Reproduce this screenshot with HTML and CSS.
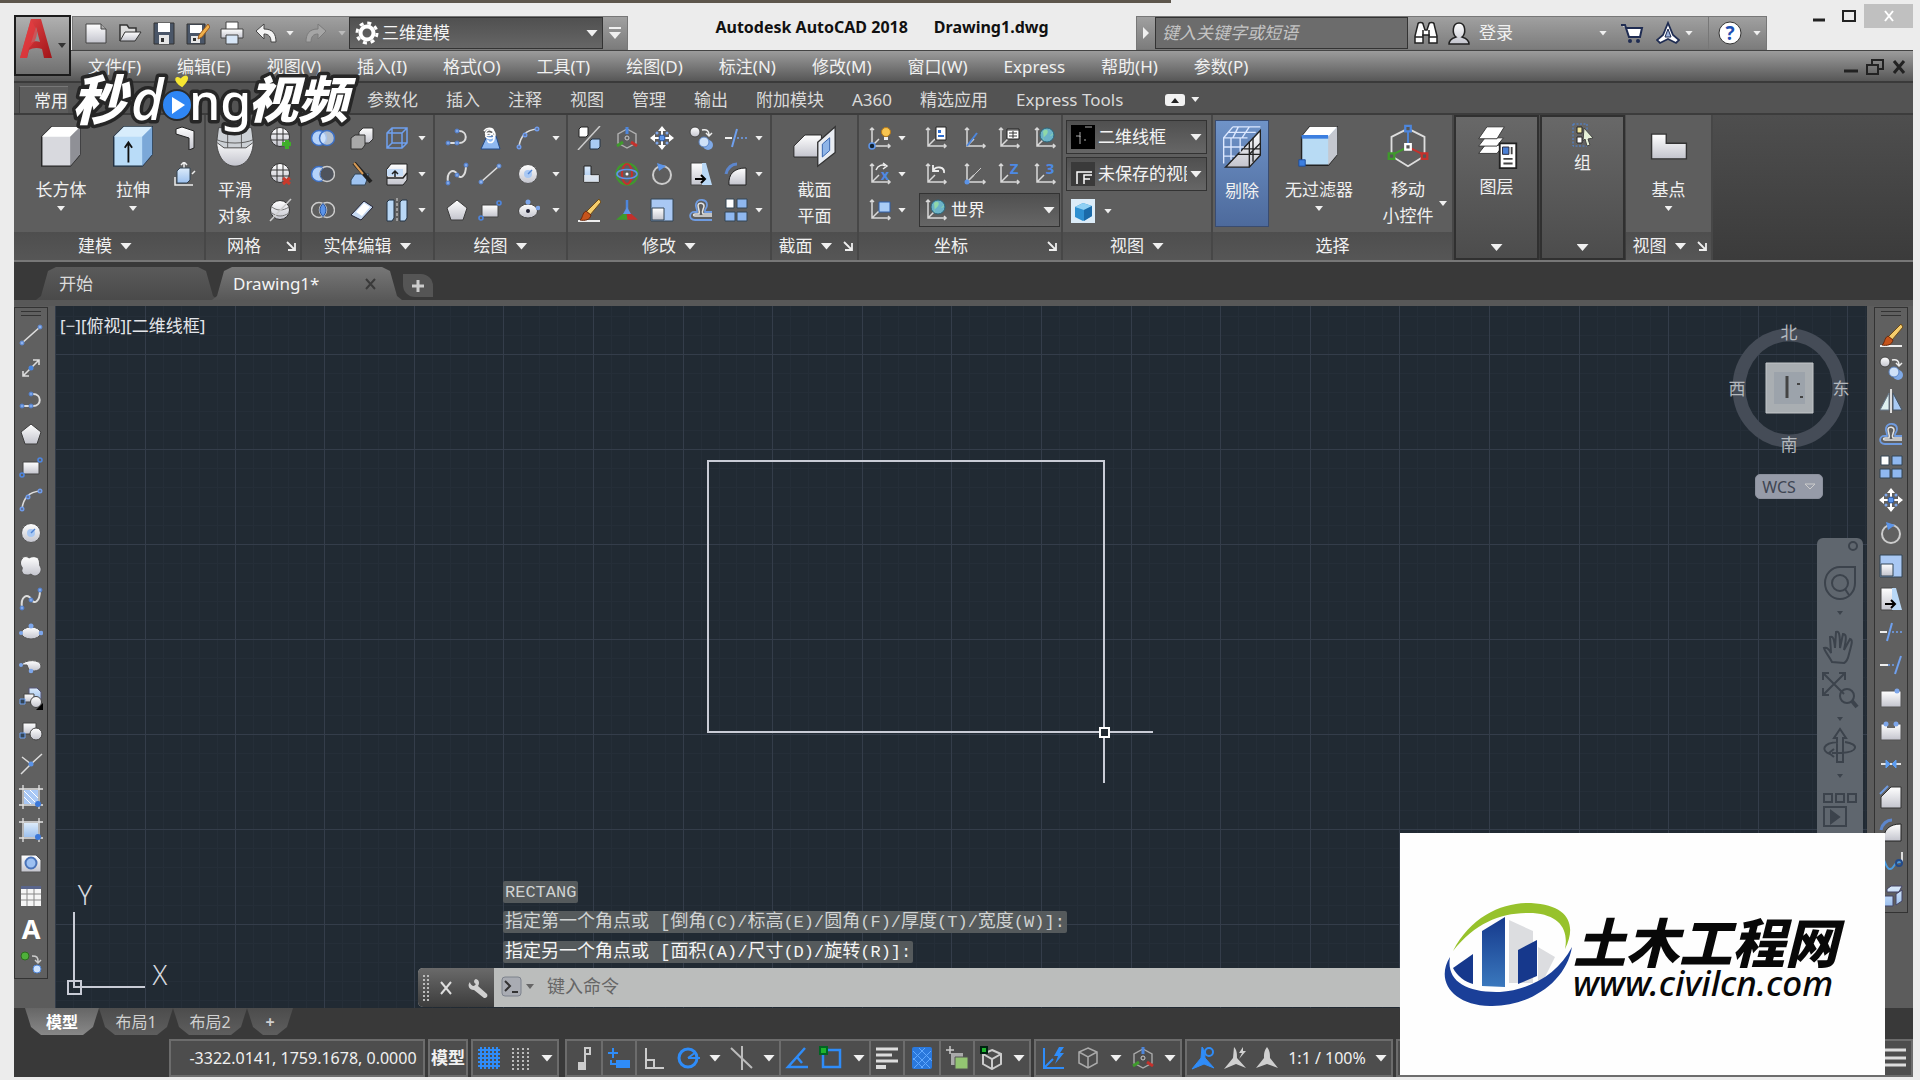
FILE: index.html
```html
<!DOCTYPE html>
<html lang="zh-CN">
<head>
<meta charset="utf-8">
<title>Autodesk AutoCAD 2018 - Drawing1.dwg</title>
<link rel="stylesheet" href="styles.css">
</head>
<body>
<svg class="defs" aria-hidden="true">
  <defs>
    <linearGradient id="gw" x1="0" y1="0" x2="0" y2="1"><stop offset="0" stop-color="#fff"/><stop offset="1" stop-color="#c3c4cd"/></linearGradient>
    <linearGradient id="gb" x1="0" y1="0" x2="0" y2="1"><stop offset="0" stop-color="#dcebfa"/><stop offset="1" stop-color="#9cc0ee"/></linearGradient>
    <linearGradient id="gred" x1="0" y1="0" x2="1" y2="1"><stop offset="0" stop-color="#e8484a"/><stop offset="1" stop-color="#a01418"/></linearGradient>
    <linearGradient id="gtower" x1="0" y1="0" x2="0" y2="1"><stop offset="0" stop-color="#15398c"/><stop offset="1" stop-color="#3a78bd"/></linearGradient>
    <g id="axes" fill="none" stroke="#d9d9d9" stroke-width="1.5"><path d="M4 2v18h18M2 4l2-2 2 2M20 18l2 2-2 2M4 20l7-7"/></g>
    <g id="tree" fill="none" stroke="#e8e8e8" stroke-width="1.4"><path d="M12 3l9 5v9l-9 5-9-5V8z"/></g>
  </defs>
  <symbol id="page" viewBox="0 0 24 24"><path d="M2 3h15l5 5v14H2z" fill="url(#gw)" stroke="#444"/><path d="M17 3v5h5" fill="#aaa" stroke="#444"/></symbol>
  <symbol id="open" viewBox="0 0 24 24"><path d="M2 20V4h7l2 3h7v4" fill="#ddd" stroke="#333" stroke-width="1.5"/><path d="M2 20l5-9h16l-6 9z" fill="url(#gw)" stroke="#333"/></symbol>
  <symbol id="save" viewBox="0 0 24 24"><path d="M2 2h20v21H2z" fill="#4a5668" stroke="#333"/><path d="M6 2h12v9H6z" fill="#fff"/><path d="M7 14h10v9H7z" fill="#e6e6e6"/><path d="M9 17h3v4H9z" fill="#333"/></symbol>
  <symbol id="saveas" viewBox="0 0 24 24"><path d="M1 3h18v20H1z" fill="#4a5668" stroke="#333"/><path d="M4 4h12v8H4z" fill="#fff"/><path d="M5 15h9v7H5z" fill="#e6e6e6"/><path d="M7 17h3v3H7z" fill="#333"/><path d="M22 3l-9 11-1 4 4-2 8-10z" fill="#f0b04a" stroke="#9a5a20"/></symbol>
  <symbol id="print" viewBox="0 0 24 24"><path d="M6 1h12v8H6z" fill="#fff" stroke="#444"/><path d="M1 8h22v9H1z" fill="url(#gw)" stroke="#444"/><path d="M6 14h12v9H6z" fill="#d7e6f7" stroke="#444"/></symbol>
  <symbol id="undo" viewBox="0 0 24 24"><path d="M10 3v5c9 0 12 5 12 13h-5c0-5-2-8-7-8v5L2 10z" fill="#f2f2f2" stroke="#444"/></symbol>
  <symbol id="redo" viewBox="0 0 24 24"><path d="M14 3v5C5 8 2 13 2 21h5c0-5 2-8 7-8v5l8-8z" fill="#a5a5a5" stroke="#7b7b7b"/></symbol>
  <symbol id="gear" viewBox="0 0 24 24"><circle cx="12" cy="12" r="6.500" fill="none" stroke="#fff" stroke-width="4"/><circle cx="12" cy="12" r="10" fill="none" stroke="#fff" stroke-width="3" stroke-dasharray="4 3.850"/></symbol>
  <symbol id="launch" viewBox="0 0 10 10"><path d="M1 1l5 5M9 2v7H2M9 9L5 5" fill="none" stroke="#eee" stroke-width="1.800"/></symbol>

  <symbol id="line" viewBox="0 0 24 24"><path d="M3 20L21 4" stroke="#ddd" stroke-width="1.600"/><g fill="#8fb3ee" stroke="#5a86d0"><circle cx="3" cy="20" r="2"/><circle cx="21" cy="4" r="2"/></g></symbol>
  <symbol id="xline" viewBox="0 0 24 24"><path d="M4 20L20 4M14 4h6v5M4 15v5h6" fill="none" stroke="#ddd" stroke-width="1.600"/><circle cx="12" cy="12" r="2.500" fill="#4a86dc"/></symbol>
  <symbol id="pline" viewBox="0 0 24 24"><path d="M2 17h12c9 0 9-12 0-12" fill="none" stroke="#ddd" stroke-width="2"/><g fill="#7da6ea" stroke="#4f7cc8"><circle cx="3" cy="17" r="2"/><circle cx="12" cy="17" r="2"/><circle cx="12" cy="5" r="2"/></g></symbol>
  <symbol id="poly" viewBox="0 0 24 24"><path d="M12 2l10 8-4 12H6L2 10z" fill="url(#gw)" stroke="#3c3c3c"/></symbol>
  <symbol id="rect" viewBox="0 0 24 24"><path d="M4 7h16v12H4z" fill="url(#gw)" stroke="#444"/><g fill="none" stroke="#4e86e0" stroke-width="1.600"><circle cx="21" cy="5" r="2"/><circle cx="3" cy="20" r="2"/></g></symbol>
  <symbol id="arc" viewBox="0 0 24 24"><path d="M3 21C4 11 10 4 21 3" fill="none" stroke="#ddd" stroke-width="1.600"/><g fill="#5d6f94" stroke="#6f9bea" stroke-width="1.400"><circle cx="3" cy="21" r="1.800"/><circle cx="9" cy="9" r="1.800"/><circle cx="21" cy="3" r="1.800"/></g></symbol>
  <symbol id="circle" viewBox="0 0 24 24"><circle cx="12" cy="12" r="9.500" fill="url(#gw)" stroke="#555"/><circle cx="12" cy="12" r="4" fill="#a9c8f3"/><path d="M12 12l4-4" stroke="#4f83d4" stroke-width="1.500"/></symbol>
  <symbol id="cloud" viewBox="0 0 24 24"><path d="M3 5c1-3 5-3 7-1 3-2 9-2 10 2 1 3 0 4 1 6 2 3 1 6-1 8-3 3-6 2-8 0-3 2-8 1-9-2-1-2 1-3 0-5-2-2-2-6 0-8z" fill="url(#gw)" stroke="#555"/></symbol>
  <symbol id="spline" viewBox="0 0 24 24"><path d="M3 21C1 9 9 6 12 12s9 3 9-9" fill="none" stroke="#ddd" stroke-width="2"/><g fill="#7da6ea" stroke="#4f7cc8"><circle cx="3" cy="21" r="2"/><circle cx="12" cy="13" r="2"/><circle cx="21" cy="3" r="2"/></g></symbol>
  <symbol id="ellipse" viewBox="0 0 24 24"><ellipse cx="12" cy="13" rx="9.500" ry="6" fill="url(#gw)" stroke="#555"/><g fill="#7da6ea"><circle cx="12" cy="6" r="2.500"/><circle cx="22" cy="13" r="2.300"/><circle cx="2" cy="13" r="2"/></g></symbol>
  <symbol id="ellipsec" viewBox="0 0 24 24"><ellipse cx="12" cy="13" rx="9.500" ry="7" fill="url(#gw)" stroke="#444"/><circle cx="12" cy="13" r="2" fill="#223"/><g fill="#7da6ea"><circle cx="12" cy="4" r="2.500"/><circle cx="22" cy="10" r="2.300"/></g></symbol>
  <symbol id="earc" viewBox="0 0 24 24"><path d="M2 12c4-6 20-6 20 1 0 5-8 6-12 4l-2-5z" fill="url(#gw)" stroke="#555"/><g fill="#7da6ea"><circle cx="12" cy="18" r="2.300"/><circle cx="2" cy="12" r="2"/></g></symbol>
  <symbol id="insb" viewBox="0 0 24 24"><path d="M10 2h8l4 4v8H10z" fill="url(#gb)" stroke="#557"/><path d="M5 8h10v8H5z" fill="url(#gw)" stroke="#444"/><circle cx="17" cy="16" r="5.500" fill="url(#gw)" stroke="#444"/><path d="M1 13h5v5H1z" fill="#345" stroke="#6fa0ee"/><path d="M24 17v7h-7z" fill="#000"/></symbol>
  <symbol id="makeb" viewBox="0 0 24 24"><path d="M4 4h13v11H4z" fill="url(#gw)" stroke="#444"/><circle cx="17" cy="15" r="6" fill="url(#gw)" stroke="#444"/><path d="M1 14h5v5H1z" fill="#345" stroke="#6fa0ee"/></symbol>
  <symbol id="point" viewBox="0 0 24 24"><path d="M3 5l9 7L23 2M12 12L2 22" fill="none" stroke="#ddd" stroke-width="1.500"/><circle cx="12" cy="12" r="2.500" fill="#5c94e8"/></symbol>
  <symbol id="hatch" viewBox="0 0 24 24"><path d="M5 5h14v14H5z" fill="#a9c8f5"/><path d="M5 12l7 7M5 6l13 13M11 5l8 8" stroke="#fff"/><path d="M4 0v24M20 0v24M0 4h24M0 20h24" stroke="#e4e4e4" stroke-width="1.300"/><circle cx="19" cy="19" r="3" fill="#3c78d8"/></symbol>
  <symbol id="grad" viewBox="0 0 24 24"><path d="M5 5h14v14H5z" fill="url(#gb)"/><path d="M4 0v24M20 0v24M0 4h24M0 20h24" stroke="#e4e4e4" stroke-width="1.300"/><circle cx="19" cy="19" r="3" fill="#3c78d8"/></symbol>
  <symbol id="region" viewBox="0 0 24 24"><path d="M2 4h15l5 5v12H2z" fill="url(#gw)" stroke="#555"/><circle cx="12" cy="12" r="5.500" fill="#9cc0f2" stroke="#4a73b8" stroke-width="2"/></symbol>
  <symbol id="table" viewBox="0 0 24 24"><path d="M2 2h20v20H2z" fill="#f6f6f6"/><path d="M2 2h20v3H2z" fill="#59658c"/><path d="M2 10h20M2 16h20M8 5v17M15 5v17" stroke="#888"/></symbol>
  <symbol id="addsel" viewBox="0 0 24 24"><circle cx="6" cy="6" r="4" fill="#4fb03a" stroke="#2c6a1e"/><path d="M13 6c5 0 6 1 6 6M16 10l3 3 3-3" fill="none" stroke="#ccc" stroke-width="1.500"/><circle cx="18" cy="19" r="4" fill="#cfe4ff" stroke="#4f86d8"/></symbol>

  <symbol id="erase" viewBox="0 0 24 24"><path d="M1 23h22" stroke="#eee" stroke-width="2"/><path d="M22 1l2 3-11 13-4-3z" fill="#f5cd6c" stroke="#6d4a17"/><path d="M9 13l5 4c-1 5-6 6-11 5 3-2 2-7 6-9z" fill="#c6541c" stroke="#6b2a0c"/></symbol>
  <symbol id="copy" viewBox="0 0 24 24"><circle cx="6" cy="6" r="5" fill="url(#gw)" stroke="#444"/><path d="M13 4c5-1 7 1 7 5M17 7l3 3 3-3" fill="none" stroke="#eee" stroke-width="1.500"/><circle cx="19" cy="19" r="5" fill="#7fa9e6"/><circle cx="15" cy="16" r="5" fill="#cfe1f8" stroke="#5d85c4"/></symbol>
  <symbol id="mirror" viewBox="0 0 24 24"><path d="M10 4v17H1z" fill="#dff0ef" stroke="#678"/><path d="M14 4v17h9z" fill="#a9caf4" stroke="#456"/><path d="M12 0v24" stroke="#ddd" stroke-width="2"/></symbol>
  <symbol id="offset" viewBox="0 0 24 24"><path d="M23 22H6c-7 0-6-9 0-8h2c1-3-2-4-1-8 2-6 11-5 11 1 0 4-3 4-2 7h7" fill="none" stroke="#6f9be0" stroke-width="1.800"/><path d="M23 18H6c-2 0-2-2 0-2h4c1-4-1-5-1-9 1-3 6-2 6 1 0 3-3 5-1 8h9" fill="none" stroke="#e4e4e4" stroke-width="1.500"/></symbol>
  <symbol id="array" viewBox="0 0 24 24"><g stroke="#345"><path d="M2 1h8v9H2z" fill="#fff"/><path d="M13 1h10v9H13zM1 14h10v9H1zM13 14h10v9H13z" fill="#8fb8f0"/></g></symbol>
  <symbol id="move" viewBox="0 0 24 24"><g fill="#fff"><path d="M12 0l4 5h-3v4h-2V5H8zM12 24l4-5h-3v-4h-2v4H8zM0 12l5-4v3h4v2H5v3zM24 12l-5-4v3h-4v2h4v3z"/></g><circle cx="12" cy="12" r="3" fill="#5c94e8" stroke="#2c5aa8"/><g fill="#7da6ea"><circle cx="7" cy="7" r="1.500"/><circle cx="17" cy="7" r="1.500"/><circle cx="7" cy="17" r="1.500"/><circle cx="17" cy="17" r="1.500"/></g></symbol>
  <symbol id="rotate" viewBox="0 0 24 24"><circle cx="12" cy="13" r="9" fill="none" stroke="#ccc" stroke-width="2"/><path d="M7 1l9 3-7 5z" fill="#5c94e8"/></symbol>
  <symbol id="scale" viewBox="0 0 24 24"><path d="M1 1h22v22H1z" fill="#a9c8f3" stroke="#345"/><path d="M2 10h12v12H2z" fill="url(#gw)" stroke="#345"/></symbol>
  <symbol id="stretch" viewBox="0 0 24 24"><path d="M2 1h12v22H2z" fill="url(#gw)" stroke="#444"/><path d="M13 1h4l6 22H13z" fill="#b9d8f6"/><path d="M6 17h9M12 13l4 4-4 4" fill="none" stroke="#000" stroke-width="2"/></symbol>
  <symbol id="trim" viewBox="0 0 24 24"><path d="M1 12h7" stroke="#eee" stroke-width="2"/><path d="M13 3L8 21" stroke="#6fa0ee" stroke-width="2"/><path d="M13 12h11" stroke="#6fa0ee" stroke-width="1.500" stroke-dasharray="2 2"/></symbol>
  <symbol id="extend" viewBox="0 0 24 24"><path d="M1 12h8" stroke="#eee" stroke-width="2"/><path d="M22 3l-6 18" stroke="#6fa0ee" stroke-width="2"/><path d="M9 12h8" stroke="#6fa0ee" stroke-width="1.500" stroke-dasharray="2 2"/></symbol>
  <symbol id="break1" viewBox="0 0 24 24"><path d="M2 5h20v16H2z" fill="url(#gw)" stroke="#555"/><circle cx="18" cy="5" r="2.500" fill="#7da6ea"/></symbol>
  <symbol id="break2" viewBox="0 0 24 24"><path d="M2 5h20v16H2z" fill="url(#gw)" stroke="#555"/><path d="M8 2h8v7H8z" fill="#666"/><circle cx="7" cy="5" r="2.500" fill="#7da6ea"/><circle cx="17" cy="5" r="2.500" fill="#7da6ea"/></symbol>
  <symbol id="join" viewBox="0 0 24 24"><path d="M2 12h20" stroke="#e4e4e4" stroke-width="2"/><path d="M7 8l4 4-4 4zM17 8l-4 4 4 4z" fill="#5c9cf0" stroke="#5c9cf0"/></symbol>
  <symbol id="chamfer" viewBox="0 0 24 24"><path d="M2 23V12L12 2h10v21z" fill="url(#gw)" stroke="#333"/><path d="M1 9l8-8" stroke="#6f9be0" stroke-width="2"/></symbol>
  <symbol id="fillet" viewBox="0 0 24 24"><path d="M5 23c-1-11 5-17 17-17v17z" fill="url(#gw)" stroke="#222"/><path d="M2 12C3 6 8 2 13 2" fill="none" stroke="#5d86cc" stroke-width="3"/></symbol>
  <symbol id="blend" viewBox="0 0 24 24"><path d="M2 6c4-1 4 12 9 12s3-8 11-7" fill="none" stroke="#4a9be0" stroke-width="2"/><path d="M23 1v10" stroke="#ddd" stroke-width="2"/><circle cx="20" cy="12" r="3" fill="none" stroke="#234a88" stroke-width="2"/></symbol>
  <symbol id="explode" viewBox="0 0 24 24"><path d="M1 12h13v10H1zM8 5l4-3h11l-3 6H8zM17 10l6-4v11l-6 4z" fill="url(#gb)" stroke="#446"/></symbol>

  <symbol id="cube" viewBox="0 0 48 48"><path d="M3 14L14 3h31v30L34 46H3z" fill="#d8d9de" stroke="#222" stroke-width="1.500"/><path d="M3 14L14 3h31L34 14z" fill="#fff"/><path d="M34 14L45 3v30L34 46z" fill="#8f9096"/></symbol>
  <symbol id="extrude" viewBox="0 0 48 48"><path d="M3 14L14 3h31v30L34 46H3z" fill="#b9dcf8" stroke="#1d2c3d" stroke-width="1.500"/><path d="M3 14L14 3h31L34 14z" fill="#d8edfc"/><path d="M34 14L45 3v30L34 46z" fill="#7ba8d8"/><path d="M19 42V20M15 26l4-6 4 6" fill="none" stroke="#111" stroke-width="2"/></symbol>
  <symbol id="sphere" viewBox="0 0 48 48"><path d="M4 18h40c0 16-8 28-20 28S4 34 4 18z" fill="url(#gw)" stroke="#444"/><path d="M6 4h36l2 16-8 6H12L4 20z" fill="#cdd1d6" stroke="#444"/><path d="M16 4v22M31 4v22M4 17c10 5 30 5 40 0" fill="none" stroke="#555"/></symbol>
  <symbol id="section" viewBox="0 0 48 48"><path d="M1 24l12-12h18v24H1z" fill="url(#gw)" stroke="#222"/><path d="M27 20L46 3v28L27 46z" fill="#e8ecf2" stroke="#333" stroke-width="1.500"/><path d="M32 22l8-7v14l-8 7z" fill="#8fb5e8" stroke="#2f5ea8"/></symbol>
  <symbol id="cull" viewBox="0 0 48 48"><path d="M6 46L44 6v27L32 46z" fill="url(#gw)" stroke="#222" stroke-width="1.500"/><path d="M32 18v28M19 32h25M36 14v26M26 26h18M44 20l-12 12" stroke="#222" stroke-width="1.500"/><path d="M4 42V14L14 2M4 14h26M4 24h22M4 34h12M12 14v24M22 14v16M14 2h30M9 8h30M20 2l-6 12M32 2l-8 12" fill="none" stroke="#dce8ff" stroke-width="1.500"/></symbol>
  <symbol id="nofilter" viewBox="0 0 48 48"><path d="M5 14L14 3h30v30L34 45H5z" fill="#b8dbf4" stroke="#222" stroke-width="1.500"/><path d="M5 14L14 3h30L34 14z" fill="#fff"/><path d="M34 14L44 3v30L34 45z" fill="#c5c8d0"/><path d="M5 12h29v4H5z" fill="#3c7fe0"/><path d="M2 39h7v7H2z" fill="#3c7fe0" stroke="#1c4b98"/></symbol>
  <symbol id="gizmo" viewBox="0 0 48 48"><path d="M24 5l18 9v21l-18 11L6 35V14z" fill="none" stroke="#ddd" stroke-width="2"/><path d="M24 25V6" stroke="#4d86dc" stroke-width="2"/><path d="M24 25L6 34" stroke="#3f9a2c" stroke-width="2"/><path d="M24 25l18 9" stroke="#c4312c" stroke-width="2"/><g fill="#555" stroke-width="2.500"><path d="M21 2h6v6h-6z" stroke="#4d86dc"/><path d="M3 32h6v6H3z" stroke="#3f9a2c"/><path d="M39 32h6v6h-6z" stroke="#c4312c"/><path d="M21 22h6v6h-6z" stroke="#fff"/></g></symbol>
  <symbol id="layers" viewBox="0 0 48 48"><g fill="#fff" stroke="#333"><path d="M4 31l7-9h20l-7 9z"/><path d="M4 23l7-9h20l-7 9z"/><path d="M4 15L13 2h19l-8 13z"/></g><path d="M27 20h18v27H27z" fill="#fff" stroke="#222" stroke-width="2"/><path d="M30 24h7v8h-7z" fill="#4a7fd4" stroke="#223"/><path d="M40 24v8M31 37h10M31 42h10" stroke="#444" stroke-width="2"/></symbol>
  <symbol id="group" viewBox="0 0 24 24"><path d="M2 1h14v22H2z" fill="none" stroke="#4d86dc" stroke-dasharray="2 1.500"/><g stroke="#222"><path d="M6 4h5v6H6z" fill="#f0e6a0"/><path d="M6 14h5v6H6z" fill="#fff"/></g><path d="M13 5l9 10-5 1 2 6-3 1-2-7-2 2z" fill="#e6f0d8" stroke="#444"/></symbol>
  <symbol id="base" viewBox="0 0 48 48"><path d="M5 11h16v10h22v17H5z" fill="url(#gw)" stroke="#333" stroke-width="1.500"/></symbol>

  <symbol id="polysolid" viewBox="0 0 24 24"><path d="M4 3l6-2 12 4v17l-5 2V12L4 8z" fill="url(#gw)" stroke="#222"/></symbol>
  <symbol id="presspull" viewBox="0 0 24 24"><path d="M12 0v8M9 3l3-3 3 3M3 15v8h18M20 12l3-3" fill="none" stroke="#eee" stroke-width="1.500"/><path d="M5 9l3-3h10v12l-3 3H5z" fill="url(#gb)" stroke="#345"/></symbol>
  <symbol id="mesh" viewBox="0 0 24 24"><circle cx="12" cy="11" r="9.500" fill="url(#gw)" stroke="#333"/><path d="M3 8h18M3 14h18M9 2v18M15 2v18" stroke="#333" fill="none"/></symbol>
  <symbol id="meshadd" viewBox="0 0 24 24"><use href="#mesh"/><path d="M19 14v9M14 18h9" stroke="#3fae2a" stroke-width="4"/></symbol>
  <symbol id="meshrem" viewBox="0 0 24 24"><use href="#mesh"/><path d="M15 16l7 6M22 16l-7 6" stroke="#c93a2c" stroke-width="3"/></symbol>
  <symbol id="meshno" viewBox="0 0 24 24"><circle cx="12" cy="12" r="9.500" fill="url(#gw)" stroke="#333"/><path d="M4 9c5 4 11 4 17 0M4 15c5 4 11 4 17 0" fill="none" stroke="#777"/><path d="M23 1L2 23" stroke="#ccc" stroke-width="1.500"/></symbol>
  <symbol id="union" viewBox="0 0 24 24"><circle cx="8" cy="12" r="7.500" fill="#b5d3fa" stroke="#3c6fc4" stroke-width="1.500"/><circle cx="16" cy="12" r="7.500" fill="#d6e7fc" fill-opacity=".7" stroke="#3c6fc4" stroke-width="1.500"/></symbol>
  <symbol id="subtract" viewBox="0 0 24 24"><circle cx="8" cy="12" r="7.500" fill="#b5d3fa" stroke="#3c6fc4" stroke-width="1.500"/><circle cx="16" cy="12" r="7.500" fill="#4f535c" stroke="#ccc" stroke-width="1.500"/><path d="M12 6c-4 4-4 8 0 12" fill="none" stroke="#3c6fc4"/></symbol>
  <symbol id="intersect" viewBox="0 0 24 24"><circle cx="8" cy="12" r="7.500" fill="none" stroke="#ccc" stroke-width="1.500"/><circle cx="16" cy="12" r="7.500" fill="none" stroke="#ccc" stroke-width="1.500"/><path d="M12 5.500c4 4 4 9 0 13-4-4-4-9 0-13z" fill="#5c94e8" stroke="#23509c"/></symbol>
  <symbol id="interf" viewBox="0 0 24 24"><path d="M9 6l4-4h10v11l-4 4H9z" fill="url(#gw)" stroke="#333"/><path d="M1 12l4-3h10v10l-3 4H1z" fill="#a8a8a8" stroke="#333"/></symbol>
  <symbol id="slice" viewBox="0 0 24 24"><path d="M1 18l4-6h14l-4 11H1z" fill="#9fc4f2" stroke="#345"/><path d="M4 1l17 19" stroke="#222" stroke-width="4"/><path d="M4 1l9 11" stroke="#d79a55" stroke-width="2"/></symbol>
  <symbol id="eraser" viewBox="0 0 24 24"><path d="M1 17L14 3l9 6-12 13z" fill="#c6d9f2" stroke="#223"/><path d="M6 14l8-9 6 4-8 9z" fill="#fff"/></symbol>
  <symbol id="frame" viewBox="0 0 24 24"><path d="M2 7l5-5h15v15l-5 5H2zM2 7h15v15M17 7l5-5M7 2v15h15M2 22l5-5" fill="none" stroke="#6fa0ee" stroke-width="1.500"/></symbol>
  <symbol id="taper" viewBox="0 0 24 24"><path d="M2 7l4-5h16v16l-4 5H2z" fill="url(#gw)" stroke="#222"/><path d="M2 7h16v7H2z" fill="#c6ddf8"/><path d="M2 16h16l4-5M10 15V9M7 12l3-3 3 3" fill="none" stroke="#222" stroke-width="1.500"/></symbol>
  <symbol id="separate" viewBox="0 0 24 24"><path d="M2 4l2-2h5v18l-2 3H2zM15 4l2-2h5v18l-2 3h-5z" fill="#b9d8f6" stroke="#234"/><path d="M12 0v24" stroke="#ddd" stroke-dasharray="3 2"/></symbol>
  <symbol id="helix" viewBox="0 0 24 24"><path d="M9 10h9l4 13H3z" fill="#8fb8f0" stroke="#234a88"/><path d="M6 5c4-5 12-2 9 2s-9 3-7-1 9-2 9 3-11 4-9 0 9-1 8 4-7 4-6 1" fill="none" stroke="#fff" stroke-width="1.600"/></symbol>
  <symbol id="align" viewBox="0 0 24 24"><path d="M2 3l2-2h7v8l-2 2H2z" fill="#fff" stroke="#222"/><path d="M13 15l2-2h8v8l-2 2h-8z" fill="#a9ccf5" stroke="#234"/><path d="M23 0L1 24" stroke="#ccc" stroke-width="1.500"/></symbol>
  <symbol id="move3d" viewBox="0 0 24 24"><g opacity=".6"><use href="#tree"/></g><path d="M12 8V1" stroke="#4d86dc" stroke-width="3"/><path d="M8 16l-6 4" stroke="#3f9a2c" stroke-width="3"/><path d="M16 16l6 4" stroke="#c4312c" stroke-width="3"/><circle cx="12" cy="12" r="2" fill="none" stroke="#ccc"/></symbol>
  <symbol id="step" viewBox="0 0 24 24"><path d="M7 4h7v9h8v7H7z" fill="url(#gb)" stroke="#222"/><path d="M7 13h15v7H7z" fill="#eee" fill-opacity=".7"/></symbol>
  <symbol id="gyro" viewBox="0 0 24 24"><circle cx="12" cy="12" r="10.500" fill="none" stroke="#3f9a2c" stroke-width="2"/><ellipse cx="12" cy="12" rx="5" ry="10" fill="none" stroke="#c4312c" stroke-width="2"/><ellipse cx="12" cy="12" rx="10" ry="4.500" fill="none" stroke="#5c94e8" stroke-width="1.600"/><circle cx="12" cy="12" r="1.500" fill="#fff"/></symbol>
  <symbol id="scale3d" viewBox="0 0 24 24"><path d="M12 13V2" stroke="#4d86dc" stroke-width="2.500"/><path d="M12 13l-9 8h10z" fill="#3f9a2c" stroke="#3f9a2c" stroke-width="1.500"/><path d="M12 13l9 8h-8z" fill="#c4312c" stroke="#c4312c" stroke-width="1.500"/><path d="M12 9l-4 7h8z" fill="#5c94e8"/></symbol>

  <symbol id="u1" viewBox="0 0 24 24"><use href="#axes"/><circle cx="4" cy="20" r="3" fill="#123" stroke="#5c94e8" stroke-width="1.500"/><circle cx="18" cy="6" r="4.500" fill="#f8c550" stroke="#b87a18"/><path d="M16 11h4v3h-4z" fill="#eee"/></symbol>
  <symbol id="u2" viewBox="0 0 24 24"><use href="#axes"/><path d="M12 1h10v13H12z" fill="#fff" stroke="#222"/><path d="M14 4h3v3h-3zM14 9h6v2h-6z" fill="#2f6fd0"/></symbol>
  <symbol id="u3" viewBox="0 0 24 24"><use href="#axes"/><path d="M4 20L14 7" stroke="#4d86dc" stroke-width="2"/></symbol>
  <symbol id="u4" viewBox="0 0 24 24"><use href="#axes"/><path d="M10 3h12v10H10z" fill="#fff" stroke="#222"/><path d="M10 4h12M12 7h8M12 10h8M16 5v7" stroke="#333"/></symbol>
  <symbol id="u5" viewBox="0 0 24 24"><use href="#axes"/><circle cx="14" cy="9" r="7" fill="#6bb3c8" stroke="#2c6478"/><path d="M10 5c4-3 6 0 4 3s-5 3-3 7M17 10c3 0 3-3 3-3" fill="#8fd8a8"/></symbol>
  <symbol id="u7" viewBox="0 0 24 24"><use href="#axes"/><path d="M9 9c3-6 12-4 11 2M9 3v6h6" fill="none" stroke="#eee" stroke-width="1.800"/></symbol>
  <symbol id="u8" viewBox="0 0 24 24"><use href="#axes"/><path d="M4 20L18 6" stroke="#ccc"/><circle cx="4" cy="20" r="2.500" fill="#5c94e8"/></symbol>
  <symbol id="u11" viewBox="0 0 24 24"><use href="#axes"/><path d="M11 4h11v10H11z" fill="#a9ccf5" stroke="#2f5ea8"/></symbol>
  <symbol id="vcube" viewBox="0 0 24 24"><path d="M0 0h24v24H0z" fill="#dcecf8"/><path d="M4 8l8-4 9 3v10l-9 5-8-4z" fill="#2e8fd0"/><path d="M4 8l8-4 9 3-8 4z" fill="#8fd0f4"/><path d="M13 11l8-4v10l-8 5z" fill="#1b6aa8"/></symbol>
</svg>

<div class="app">
  <header class="titlebar">
    <button class="appbtn"><svg width="34" height="44" viewBox="0 0 34 44"><path d="M12 2h10l11 39h-8l-2-9c-5-2-10-1-13 1l-2 8H1z" fill="url(#gred)"/><path d="M17 10l-5 16c3-2 6-2 9-1z" fill="#8f8f8f"/><path d="M12 2l6 12c0 8-3 12-8 17l-2 10H1z" fill="#e23c40" fill-opacity=".7"/></svg><i class="tri dark"></i></button>
    <div class="qat">
      <button><svg class="ic"><use href="#page"/></svg></button><button><svg class="ic"><use href="#open"/></svg></button><button><svg class="ic"><use href="#save"/></svg></button><button><svg class="ic"><use href="#saveas"/></svg></button><button><svg class="ic"><use href="#print"/></svg></button><button><svg class="ic"><use href="#undo"/></svg></button><button class="nar"><i class="tri"></i></button><button class="redo"><svg class="ic"><use href="#redo"/></svg></button><button class="nar"><i class="tri dim"></i></button>
      <div class="combo workspace"><svg class="ic"><use href="#gear"/></svg><select aria-label="工作空间"><option>三维建模</option></select><i class="tri big"></i></div>
      <button class="qmore"><i class="bar"></i><i class="tri big"></i></button>
    </div>
    <h1 class="doc"><span>Autodesk AutoCAD 2018</span><span>Drawing1.dwg</span></h1>
    <div class="info">
      <button class="expand"><i class="tri right"></i></button>
      <input type="text" aria-label="搜索" placeholder="键入关键字或短语">
      <button class="w36"><svg class="ic" viewBox="0 0 24 24"><path d="M4 3c0-2 5-2 5 0l2 6h2l2-6c0-2 5-2 5 0l3 12v7h-8v-8H9v8H1v-7z" fill="#fff" stroke="#222" stroke-width="1.500"/><path d="M1 16h8M15 16h8M9 9v6M15 9v6" stroke="#222" stroke-width="1.500"/></svg></button>
      <a class="login" href="#login"><svg class="ic" viewBox="0 0 24 24"><path d="M2 23c0-5 4-6 7-7C5 13 5 2 12 2s7 11 3 14c3 1 7 2 7 7z" fill="url(#gw)" stroke="#222" stroke-width="1.500"/></svg>登录</a>
      <button class="nar"><i class="tri"></i></button>
      <button class="w44"><svg class="ic" viewBox="0 0 24 24"><path d="M1 4h4l4 12h11l2-9H6" fill="#fff" stroke="#1f2c52" stroke-width="2"/><circle cx="10" cy="20" r="2" fill="#1f2c52"/><circle cx="18" cy="20" r="2" fill="#1f2c52"/></svg></button>
      <button><svg class="ic" viewBox="0 0 24 24"><path d="M12 2l5 12 6 5-3 3-8-4-8 4-3-3 6-5z" fill="#fff" stroke="#1f2c52" stroke-width="1.800"/><path d="M12 8l3 8H9z" fill="#9fb4dc" stroke="#1f2c52"/></svg></button>
      <button class="nar"><i class="tri"></i></button>
      <button class="sep"><svg class="ic" viewBox="0 0 24 24"><circle cx="12" cy="12" r="11" fill="#fff" stroke="#333"/><text x="12" y="19" font-size="19" font-weight="700" fill="#1c4fb4" text-anchor="middle" class="uifont">?</text></svg></button>
      <button class="nar"><i class="tri"></i></button>
    </div>
    <div class="winbtns">
      <button><svg width="12" height="12"><path d="M0 10h12" stroke="#222" stroke-width="3"/></svg></button>
      <button><svg width="14" height="12"><path d="M1 1h12v10H1z" fill="none" stroke="#222" stroke-width="2"/></svg></button>
      <button class="close"><svg width="12" height="12"><path d="M2 1l8 10M10 1L2 11" stroke="#fff" stroke-width="2"/></svg></button>
    </div>
  </header>

  <nav class="menubar">
    <a href="#m">文件(F)</a><a href="#m">编辑(E)</a><a href="#m">视图(V)</a><a href="#m">插入(I)</a><a href="#m">格式(O)</a><a href="#m">工具(T)</a><a href="#m">绘图(D)</a><a href="#m">标注(N)</a><a href="#m">修改(M)</a><a href="#m">窗口(W)</a><a href="#m">Express</a><a href="#m">帮助(H)</a><a href="#m">参数(P)</a>
    <div class="docbtns">
      <button><svg width="14" height="14"><path d="M0 11h14" stroke="#222" stroke-width="3"/></svg></button>
      <button><svg width="18" height="16"><path d="M6 5V1h11v9h-5M1 6h11v9H1z" fill="none" stroke="#222" stroke-width="2"/></svg></button>
      <button><svg width="14" height="14"><path d="M2 1l10 12M12 1L2 13" stroke="#222" stroke-width="3"/></svg></button>
    </div>
  </nav>

  <nav class="tabs">
    <a class="on" href="#t">常用</a><a href="#t">参数化</a><a href="#t">插入</a><a href="#t">注释</a><a href="#t">视图</a><a href="#t">管理</a><a href="#t">输出</a><a href="#t">附加模块</a><a href="#t">A360</a><a href="#t">精选应用</a><a href="#t">Express Tools</a>
    <button class="collapse"><svg width="20" height="12"><rect width="20" height="12" rx="3" fill="#f2f2f2"/><path d="M6 9l4-5 4 5z" fill="#222"/></svg><i class="tri"></i></button>
  </nav>

  <div class="ribbon">
    <section class="panel p-model">
      <div class="body">
        <button class="bigb"><svg class="bi"><use href="#cube"/></svg><span>长方体</span><i class="tri"></i></button>
        <button class="bigb"><svg class="bi"><use href="#extrude"/></svg><span>拉伸</span><i class="tri"></i></button>
        <div class="grid"><button><svg class="ic"><use href="#polysolid"/></svg></button><button><svg class="ic"><use href="#presspull"/></svg></button></div>
      </div>
      <h2><span>建模 <i class="tri big"></i></span></h2>
    </section>
    <section class="panel p-mesh">
      <div class="body">
        <button class="bigb"><svg class="bi"><use href="#sphere"/></svg><span>平滑<br>对象</span></button>
        <div class="grid"><button><svg class="ic"><use href="#meshadd"/></svg></button><button><svg class="ic"><use href="#meshrem"/></svg></button><button><svg class="ic"><use href="#meshno"/></svg></button></div>
      </div>
      <h2><span>网格</span><button class="launch"><svg width="10" height="10"><use href="#launch"/></svg></button></h2>
    </section>
    <section class="panel p-solid">
      <div class="body"><div class="grid">
        <button><svg class="ic"><use href="#union"/></svg></button><button><svg class="ic"><use href="#interf"/></svg></button><button><svg class="ic"><use href="#frame"/></svg></button><button><i class="tri"></i></button>
        <button><svg class="ic"><use href="#subtract"/></svg></button><button><svg class="ic"><use href="#slice"/></svg></button><button><svg class="ic"><use href="#taper"/></svg></button><button><i class="tri"></i></button>
        <button><svg class="ic"><use href="#intersect"/></svg></button><button><svg class="ic"><use href="#eraser"/></svg></button><button><svg class="ic"><use href="#separate"/></svg></button><button><i class="tri"></i></button>
      </div></div>
      <h2><span>实体编辑 <i class="tri big"></i></span></h2>
    </section>
    <section class="panel p-draw">
      <div class="body"><div class="grid">
        <button><svg class="ic"><use href="#pline"/></svg></button><button><svg class="ic"><use href="#helix"/></svg></button><button><svg class="ic"><use href="#arc"/></svg></button><button><i class="tri"></i></button>
        <button><svg class="ic"><use href="#spline"/></svg></button><button><svg class="ic"><use href="#line"/></svg></button><button><svg class="ic"><use href="#circle"/></svg></button><button><i class="tri"></i></button>
        <button><svg class="ic"><use href="#poly"/></svg></button><button><svg class="ic"><use href="#rect"/></svg></button><button><svg class="ic"><use href="#ellipsec"/></svg></button><button><i class="tri"></i></button>
      </div></div>
      <h2><span>绘图 <i class="tri big"></i></span></h2>
    </section>
    <section class="panel p-edit">
      <div class="body"><div class="grid">
        <button><svg class="ic"><use href="#align"/></svg></button><button><svg class="ic"><use href="#move3d"/></svg></button><button><svg class="ic"><use href="#move"/></svg></button><button><svg class="ic"><use href="#copy"/></svg></button><button><svg class="ic"><use href="#trim"/></svg></button><button><i class="tri"></i></button>
        <button><svg class="ic"><use href="#step"/></svg></button><button><svg class="ic"><use href="#gyro"/></svg></button><button><svg class="ic"><use href="#rotate"/></svg></button><button><svg class="ic"><use href="#stretch"/></svg></button><button><svg class="ic"><use href="#fillet"/></svg></button><button><i class="tri"></i></button>
        <button><svg class="ic"><use href="#erase"/></svg></button><button><svg class="ic"><use href="#scale3d"/></svg></button><button><svg class="ic"><use href="#scale"/></svg></button><button><svg class="ic"><use href="#offset"/></svg></button><button><svg class="ic"><use href="#array"/></svg></button><button><i class="tri"></i></button>
      </div></div>
      <h2><span>修改 <i class="tri big"></i></span></h2>
    </section>
    <section class="panel p-sect">
      <div class="body"><button class="bigb"><svg class="bi"><use href="#section"/></svg><span>截面<br>平面</span></button></div>
      <h2><span>截面 <i class="tri big"></i></span><button class="launch"><svg width="10" height="10"><use href="#launch"/></svg></button></h2>
    </section>
    <section class="panel p-ucs">
      <div class="body"><div class="grid">
        <button><svg class="ic"><use href="#u1"/></svg></button><button><i class="tri"></i></button><button><svg class="ic"><use href="#u2"/></svg></button><button><svg class="ic"><use href="#u3"/></svg></button><button><svg class="ic"><use href="#u4"/></svg></button><button><svg class="ic"><use href="#u5"/></svg></button>
        <button><svg class="ic" viewBox="0 0 24 24"><use href="#axes"/><path d="M8 8c2-5 7-6 9-4M15 1l4 3-4 3" fill="none" stroke="#eee" stroke-width="1.500"/><text x="17" y="18" font-size="14" font-weight="700" fill="#4d8ae4" text-anchor="middle" class="uifont">x</text></svg></button><button><i class="tri"></i></button><button><svg class="ic"><use href="#u7"/></svg></button><button><svg class="ic"><use href="#u8"/></svg></button>
        <button><svg class="ic" viewBox="0 0 24 24"><use href="#axes"/><text x="17" y="12" font-size="15" font-weight="700" fill="#4d8ae4" text-anchor="middle" class="uifont">Z</text></svg></button>
        <button><svg class="ic" viewBox="0 0 24 24"><use href="#axes"/><text x="17" y="12" font-size="15" font-weight="700" fill="#4d8ae4" text-anchor="middle" class="uifont">3</text></svg></button>
        <button><svg class="ic"><use href="#u11"/></svg></button><button><i class="tri"></i></button>
        <div class="combo world"><svg class="ic"><use href="#u5"/></svg><select aria-label="UCS"><option>世界</option></select><i class="tri big"></i></div>
      </div></div>
      <h2><span>坐标</span><button class="launch"><svg width="10" height="10"><use href="#launch"/></svg></button></h2>
    </section>
    <section class="panel p-view">
      <div class="body">
        <div class="combo"><svg class="ic" viewBox="0 0 24 24"><path d="M0 0h24v24H0z"/><path d="M14 2h7M9 7v5M5 11h4v8M14 14v2" stroke="#aaa" fill="none"/></svg><select aria-label="视觉样式"><option>二维线框</option></select><i class="tri big"></i></div>
        <div class="combo"><svg class="ic" viewBox="0 0 24 24"><path d="M0 0h24v24H0z" fill="#3a3a3a"/><path d="M6 22V10h15M13 22V13h8M13 17h6" stroke="#fff" fill="none" stroke-width="1.500"/></svg><select aria-label="视图"><option>未保存的视图</option></select><i class="tri big"></i></div>
        <button class="vc"><svg class="ic"><use href="#vcube"/></svg><i class="tri"></i></button>
      </div>
      <h2><span>视图 <i class="tri big"></i></span></h2>
    </section>
    <section class="panel p-sel">
      <div class="body">
        <button class="bigb pressed"><svg class="bi"><use href="#cull"/></svg><span>剔除</span></button>
        <button class="bigb"><svg class="bi"><use href="#nofilter"/></svg><span>无过滤器</span><i class="tri"></i></button>
        <button class="bigb giz"><svg class="bi"><use href="#gizmo"/></svg><span>移动<br>小控件</span><i class="tri"></i></button>
      </div>
      <h2><span>选择</span></h2>
    </section>
    <button class="fold"><svg class="bi"><use href="#layers"/></svg><span>图层</span><i class="tri big"></i></button>
    <button class="fold"><svg class="ic"><use href="#group"/></svg><span>组</span><i class="tri big"></i></button>
    <section class="panel p-base">
      <div class="body"><button class="bigb"><svg class="bi"><use href="#base"/></svg><span>基点</span><i class="tri"></i></button></div>
      <h2><span>视图 <i class="tri big"></i></span><button class="launch"><svg width="10" height="10"><use href="#launch"/></svg></button></h2>
    </section>
  </div>

  <nav class="filetabs">
    <a class="ft" href="#start">开始</a>
    <a class="ft on" href="#d1">Drawing1* <svg width="11" height="12"><path d="M1 1l9 10M10 1L1 11" stroke="#3a3a3a" stroke-width="2"/></svg></a>
    <button class="plus"><svg width="14" height="14"><path d="M7 1v12M1 7h12" stroke="#ccc" stroke-width="3"/></svg></button>
  </nav>

  <main class="work">
    <aside class="tools">
      <i class="grip"></i>
      <button><svg class="ic"><use href="#line"/></svg></button><button><svg class="ic"><use href="#xline"/></svg></button><button><svg class="ic"><use href="#pline"/></svg></button><button><svg class="ic"><use href="#poly"/></svg></button><button><svg class="ic"><use href="#rect"/></svg></button><button><svg class="ic"><use href="#arc"/></svg></button><button><svg class="ic"><use href="#circle"/></svg></button><button><svg class="ic"><use href="#cloud"/></svg></button><button><svg class="ic"><use href="#spline"/></svg></button><button><svg class="ic"><use href="#ellipse"/></svg></button><button><svg class="ic"><use href="#earc"/></svg></button><button><svg class="ic"><use href="#insb"/></svg></button><button><svg class="ic"><use href="#makeb"/></svg></button><button><svg class="ic"><use href="#point"/></svg></button><button><svg class="ic"><use href="#hatch"/></svg></button><button><svg class="ic"><use href="#grad"/></svg></button><button><svg class="ic"><use href="#region"/></svg></button><button><svg class="ic"><use href="#table"/></svg></button><button class="txt">A</button><button><svg class="ic"><use href="#addsel"/></svg></button>
    </aside>

    <div class="canvas">
      <svg class="drawing" width="100%" height="100%">
        <defs>
          <pattern id="minor" x="90" y="48" width="448" height="19" patternUnits="userSpaceOnUse"><path d="M0 .5h448M18.500 0v19M36.500 0v19M54.500 0v19M72.500 0v19M108.500 0v19M126.500 0v19M143.500 0v19M161.500 0v19M197.500 0v19M215.500 0v19M233.500 0v19M251.500 0v19M287.500 0v19M305.500 0v19M323.500 0v19M341.500 0v19M376.500 0v19M394.500 0v19M412.500 0v19M430.500 0v19" stroke="#252e38" fill="none"/></pattern>
          <pattern id="major" x="90" y="48" width="448" height="95" patternUnits="userSpaceOnUse"><path d="M0 .5h448M.5 0v95M90.500 0v95M179.500 0v95M269.500 0v95M358.500 0v95" stroke="#343d4a" fill="none"/></pattern>
        </defs>
        <rect width="100%" height="100%" fill="url(#minor)"/>
        <rect width="100%" height="100%" fill="url(#major)"/>
        <g fill="none" stroke="#c9ccd6" stroke-width="2">
          <path d="M653 155h396v271H653zM1001 426h97M1049 376v101"/>
          <path d="M1045 422h9v9h-9z" fill="#212a33" stroke="#fff"/>
          <path d="M19 606v75h71M13 675h13v13H13z"/>
        </g>
        <g class="uifont" fill="#d4d7de" font-size="27" font-weight="300" text-anchor="middle"><text x="30" y="599">Y</text><text x="105" y="679">X</text></g>
      </svg>
      <div class="vplabel">[−][俯视][二维线框]</div>

      <div class="viewcube">
        <svg width="124" height="136"><ellipse cx="62" cy="66" rx="50" ry="53" fill="none" stroke="#454c57" stroke-width="13"/><path d="M39 41h47v50H39z" fill="#a9aeb2" stroke="#c3c6c9"/><path d="M47 50h31v32H47z" fill="#9ca3ab"/><path d="M60 54v22" stroke="#444" stroke-width="3"/><path d="M70 61h3v2h-3zM73 74h3v2h-3z" fill="#444"/>
        <g class="uifont" font-size="17" fill="#b4b8bd" text-anchor="middle"><text x="62" y="17">北</text><text x="10" y="73">西</text><text x="114" y="73">东</text><text x="62" y="129">南</text></g></svg>
        <button class="wcs">WCS <svg width="12" height="7"><path d="M1 1h10L6 6z" fill="none" stroke="#ccc"/></svg></button>
      </div>

      <div class="navbar">
        <svg width="46" height="300" fill="none" stroke="#3c434c" stroke-width="2">
          <circle cx="36" cy="8" r="4"/>
          <path d="M23 29h15v16a15 16 0 1 1-15-16z"/><circle cx="23" cy="45" r="8"/><path d="M28 51l4 6"/>
          <path d="M20 73h6l-3 4zM20 179h6l-3 4zM20 236h6l-3 4z" fill="#3c434c" stroke="none"/>
          <path d="M15 124c-3-6-7-10-8-14 3-1 5 1 7 5l-1-16c3-1 4 1 5 11l1-16c3-1 4 1 4 16l3-14c3 0 4 2 1 16l6-11c3 1 2 4-1 15-1 5-3 8-5 9z"/>
          <path d="M7 136l20 20M27 136L7 156M6 142v-7h6M22 135h6v7M6 150v7h6"/><circle cx="30" cy="158" r="7"/><path d="M35 163l5 6" stroke-width="4"/>
          <path d="M20 224v-24h-3l6-9 6 9h-3v24zM13 216c-9-3-8-11 8-12M28 204c14 2 14 10-4 11h-9M17 211l-5 4 5 4"/>
          <path d="M7 256h8v8H7zM19 256h8v8h-8zM31 256h8v8h-8zM7 269h22v19H7z"/><path d="M14 273l8 6-8 6z" fill="#3c434c"/>
        </svg>
      </div>

      <div class="cmd">
        <div class="hist"><p><span class="lat">RECTANG</span></p><p>指定第一个角点或 [倒角<span class="lat">(C)/</span>标高<span class="lat">(E)/</span>圆角<span class="lat">(F)/</span>厚度<span class="lat">(T)/</span>宽度<span class="lat">(W)]:</span></p><p class="cur">指定另一个角点或 [面积<span class="lat">(A)/</span>尺寸<span class="lat">(D)/</span>旋转<span class="lat">(R)]:</span></p></div>
        <div class="cmdbar">
          <div class="cmdl"><i class="dots"></i><button><svg width="14" height="14"><path d="M2 1l10 12M12 1L2 13" stroke="#ddd" stroke-width="2"/></svg></button><button><svg width="22" height="22" viewBox="0 0 22 22"><path d="M9 2c-2 0-3 4 0 5L7 9C5 9 3 7 3 5c-3 3-1 8 4 8l10 8c3 0 4-2 3-4L11 9c2-3 1-6-2-7z" fill="#d0d0d0"/></svg></button></div>
          <button class="prompt"><svg width="21" height="21"><rect x="1" y="1" width="19" height="19" rx="3" fill="#a9acb3" stroke="#7d828c"/><path d="M4 5l5 5-5 5M11 16h6" fill="none" stroke="#333" stroke-width="2"/></svg><i class="tri gray"></i></button>
          <input type="text" aria-label="命令行" placeholder="键入命令">
        </div>
      </div>
    </div>

    <aside class="tools right">
      <i class="grip"></i>
      <button><svg class="ic"><use href="#erase"/></svg></button><button><svg class="ic"><use href="#copy"/></svg></button><button><svg class="ic"><use href="#mirror"/></svg></button><button><svg class="ic"><use href="#offset"/></svg></button><button><svg class="ic"><use href="#array"/></svg></button><button><svg class="ic"><use href="#move"/></svg></button><button><svg class="ic"><use href="#rotate"/></svg></button><button><svg class="ic"><use href="#scale"/></svg></button><button><svg class="ic"><use href="#stretch"/></svg></button><button><svg class="ic"><use href="#trim"/></svg></button><button><svg class="ic"><use href="#extend"/></svg></button><button><svg class="ic"><use href="#break1"/></svg></button><button><svg class="ic"><use href="#break2"/></svg></button><button><svg class="ic"><use href="#join"/></svg></button><button><svg class="ic"><use href="#chamfer"/></svg></button><button><svg class="ic"><use href="#fillet"/></svg></button><button><svg class="ic"><use href="#blend"/></svg></button><button><svg class="ic"><use href="#explode"/></svg></button>
    </aside>
  </main>

  <nav class="layouts"><a class="lt on" href="#l">模型</a><a class="lt" href="#l">布局1</a><a class="lt" href="#l">布局2</a><button class="lt add">+</button></nav>

  <footer class="status">
    <div class="sg coords">-3322.0141, 1759.1678, 0.0000</div>
    <button class="sg model">模型</button>
    <div class="sg">
      <button class="w32"><svg class="ic" viewBox="0 0 24 24"><path d="M4 1v22M8 1v22M12 1v22M16 1v22M20 1v22M1 4h22M1 8h22M1 12h22M1 16h22M1 20h22" stroke="#2f8cf8" stroke-width="2"/></svg></button>
      <button class="w32"><svg class="ic" viewBox="0 0 24 24"><path d="M3 3h20M3 7h20M3 11h20M3 15h20M3 19h20M3 23h20" stroke="#bbb" stroke-width="2" stroke-dasharray="2 3"/></svg></button>
      <button class="w20"><i class="tri big"></i></button>
    </div>
    <div class="sg modes">
      <button class="w34"><svg class="ic" viewBox="0 0 24 24"><path d="M13 20V2h5v6h-5M7 17h6v6H7z" fill="none" stroke="#ccc" stroke-width="2"/><path d="M7 17h6v6H7z" fill="#ccc"/></svg></button>
      <button class="w34 d"><svg class="ic" viewBox="0 0 24 24"><path d="M6 2v10M1 7h10" stroke="#2f8cf8" stroke-width="2"/><path d="M9 14h14v8H9z" fill="#2f8cf8"/><path d="M4 14v4h5" stroke="#2f8cf8" fill="none" stroke-width="2"/></svg></button>
      <button class="w36 d"><svg class="ic" viewBox="0 0 24 24"><path d="M4 2v20h18M4 14h8v8" fill="none" stroke="#ccc" stroke-width="2"/></svg></button>
      <button class="w34"><svg class="ic" viewBox="0 0 24 24"><circle cx="12" cy="12" r="9" fill="none" stroke="#2f8cf8" stroke-width="3"/><path d="M12 12h12M12 12l8-6" stroke="#2f8cf8" stroke-width="2"/></svg></button>
      <button class="w20"><i class="tri big"></i></button>
      <button class="w34"><svg class="ic" viewBox="0 0 24 24"><path d="M1 2l21 20M12 0v24" stroke="#bbb" stroke-width="2"/></svg></button>
      <button class="w20"><i class="tri big"></i></button>
      <button class="w34 d"><svg class="ic" viewBox="0 0 24 24"><path d="M20 2L3 21h20M12 11l5 6" fill="none" stroke="#2f8cf8" stroke-width="2.500"/></svg></button>
      <button class="w36"><svg class="ic" viewBox="0 0 24 24"><path d="M4 4h17v17H4z" fill="none" stroke="#2f8cf8" stroke-width="2.500"/><path d="M1 1h7v7H1z" fill="#1fb52c" stroke="#062" stroke-width="2"/></svg></button>
      <button class="w20"><i class="tri big"></i></button>
      <button class="w34 d"><svg class="ic" viewBox="0 0 24 24"><path d="M1 3h22M1 9h16M1 15h22" stroke="#ddd" stroke-width="3"/><path d="M1 21h10" stroke="#ddd" stroke-width="4"/></svg></button>
      <button class="w36 d"><svg class="ic" viewBox="0 0 24 24"><rect x="2" y="1" width="20" height="22" rx="2" fill="#2a78dc"/><path d="M3 5l17 17M3 12l10 10M9 2l13 13M21 5L4 22M21 12L11 22M15 2L3 14" stroke="#5fa8ff"/></svg></button>
      <button class="w34 d"><svg class="ic" viewBox="0 0 24 24"><path d="M5 0v8M1 4h8" stroke="#ccc" stroke-width="1.500"/><path d="M6 7h12v12H6z" fill="#aaa"/><path d="M10 11h13v12H10z" fill="#93c572" stroke="#555"/></svg></button>
      <button class="w36 d"><svg class="ic" viewBox="0 0 24 24"><path d="M12 4l9 4v10l-9 5-9-5V8zM3 8l9 5 9-5M12 13v10" fill="none" stroke="#ccc" stroke-width="2"/><path d="M1 1h6v6H1z" fill="#1fb52c" stroke="#021" stroke-width="2"/></svg></button>
      <button class="w20"><i class="tri big"></i></button>
    </div>
    <div class="sg">
      <button class="w34"><svg class="ic" viewBox="0 0 24 24"><path d="M3 2v20h20M3 22l9-9" fill="none" stroke="#2f8cf8" stroke-width="2"/><path d="M18 1l-5 9h4l-3 8 9-11h-4l4-6z" fill="#2f8cf8"/></svg></button>
      <button class="w36"><svg class="ic" viewBox="0 0 24 24"><path d="M12 2l9 4v11l-9 5-9-5V6zM3 6l9 5 9-5M12 11v11" fill="none" stroke="#aaa" stroke-width="1.500"/></svg></button>
      <button class="w20"><i class="tri big"></i></button>
      <button class="w34"><svg class="ic"><use href="#move3d"/></svg></button>
      <button class="w20"><i class="tri big"></i></button>
    </div>
    <div class="sg">
      <button class="w32"><svg class="ic" viewBox="0 0 24 24"><path d="M11 1c3 3 3 7 3 11l9 10-10-4-12 5 9-11z" fill="#2f8cf8" stroke="#2f8cf8"/><circle cx="18" cy="6" r="4" fill="none" stroke="#2f8cf8" stroke-width="2"/></svg></button>
      <button class="w32"><svg class="ic" viewBox="0 0 24 24"><path d="M11 1c3 3 3 7 3 11l9 10-10-4-12 5 9-11z" fill="#d0d0d0"/><path d="M20 1l-4 6h3l-3 6 7-8h-3z" fill="#d0d0d0"/></svg></button>
      <button class="w32"><svg class="ic" viewBox="0 0 24 24"><path d="M12 1c3 4 3 7 3 11l8 10-11-4-11 4 8-10c0-4 0-7 3-11z" fill="#d0d0d0"/></svg></button>
      <button class="scaleb">1:1 / 100%</button>
      <button class="w20"><i class="tri big"></i></button>
    </div>
    <div class="sg rest"><button class="ham"><svg width="24" height="20"><path d="M0 2h24M0 10h24M0 17h24" stroke="#ddd" stroke-width="3"/></svg></button></div>
  </footer>
</div>

<div class="videomark">
  <svg width="300" height="66" viewBox="0 0 300 66">
    <g class="uifont mark"><text x="2" y="50" font-size="54" font-weight="900" font-style="italic">秒</text><text x="61" y="50" font-size="56" font-weight="500" font-style="italic">d</text><text x="119" y="50" font-size="50" font-weight="500">ng</text><text x="178" y="48" font-size="50" font-weight="900" font-style="italic">视频</text></g>
    <circle cx="107" cy="35" r="15" fill="#2f86f4" stroke="#2b2b2b" stroke-width="2"/><path d="M102 27l13 8-13 9z" fill="#fff"/>
    <path d="M112 16c-9-6-6-11-1-6 4-6 11-4 1 6z" fill="#f6e632" stroke="#f6e632" stroke-width="2"/>
  </svg>
</div>

<div class="sitelogo">
  <svg width="130" height="106" viewBox="0 0 130 106">
    <path d="M66 19l24 11v52H66zM95 46l17 10-10 20-7 6z" fill="#dcdde0"/>
    <path d="M10 50C28 15 60 1 88 2c38 2 46 22 34 46 4-20-6-34-32-36C60 11 34 20 10 50z" fill="#97c22c"/>
    <path d="M39 30l23-14v70l-23-1z" fill="url(#gtower)"/><path d="M75 49l19-10v36l-19 8z" fill="#16388c"/><path d="M10 67l20-14v30c-8-2-16-8-20-16z" fill="#16388c"/>
    <path d="M7 56c-4 24 16 36 50 35 30-2 58-18 72-45-6 36-44 60-82 59C10 104-8 80 7 56z" fill="#1a3f98"/>
  </svg>
  <div class="sitename"><strong>土木工程网</strong><em>www.civilcn.com</em></div>
</div>
</body>
</html>
```
FILE: styles.css
```css
* { box-sizing: border-box; }
body {
  margin: 0;
  background: #ececec;
  color: #f0f0f0;
  font: 17px/24px "Noto Sans", "Noto Sans CJK SC", sans-serif;
}
.uifont { font-family: "Noto Sans", "Noto Sans CJK SC", sans-serif; }
.defs { position: absolute; width: 0; height: 0; }
button, select, input { font: inherit; color: inherit; margin: 0; padding: 0; border: 0; background: none; border-radius: 0; }
button { display: flex; align-items: center; justify-content: center; white-space: nowrap; }
a { color: inherit; text-decoration: none; white-space: nowrap; }
h1, h2, p { margin: 0; font: inherit; }
.ic { width: 24px; height: 24px; flex: none; }
.bi { width: 44px; height: 48px; flex: none; }

.tri { display: inline-block; flex: none; width: 8px; height: 5px; background: #f0f0f0; clip-path: polygon(0 0, 100% 0, 50% 100%); }
.tri.big { width: 12px; height: 7px; }
.tri.dark { background: #333; }
.tri.dim { background: #bbb; }
.tri.gray { background: #666; }
.tri.right { width: 6px; height: 12px; clip-path: polygon(0 0, 100% 50%, 0 100%); }

.app { min-height: 100vh; display: flex; flex-direction: column; padding: 4px 7px 3px 14px; background: linear-gradient(90deg, #5d564c 61%, #ececec 61%) 0 0 / 100% 3px no-repeat; }

/* title bar */
.titlebar { position: relative; display: flex; align-items: flex-start; height: 47px; padding-left: 58px; border-bottom: 1px solid #444; background: #ececec; }
.appbtn { position: absolute; z-index: 2; left: 0; top: 11px; width: 57px; height: 61px; gap: 5px; border: 2px solid #1c1c1c; background: linear-gradient(#b0b0b0, #707070); align-items: center; }
.appbtn svg { align-self: flex-start; }
.qat, .info { display: flex; align-items: stretch; height: 34px; margin-top: 12px; background: linear-gradient(#a0a0a0, #7c7c7c); border: 1px solid #777; }
.qat { padding-left: 6px; }
.qat button { width: 34px; }
.qat .nar, .info .nar { width: 14px; }
.qat .redo { width: 38px; }
.qat .qmore { width: 24px; flex-direction: column; gap: 3px; }
.bar { width: 12px; height: 2px; background: #f0f0f0; }
.combo { display: flex; align-items: center; gap: 3px; height: 34px; padding: 0 4px; border: 1px solid #333; background: linear-gradient(#505050, #666); }
.combo select { flex: 1; min-width: 0; width: 0; appearance: none; outline: 0; color: #f4f4f4; }
.workspace { width: 254px; align-self: center; height: 32px; padding-left: 5px; }
.doc { flex: 1; display: flex; justify-content: center; gap: 26px; padding-top: 11px; color: #111; font-size: 16px; font-weight: 700; white-space: nowrap; }
.info { width: 631px; }
.info .expand { width: 18px; }
.info input { width: 253px; padding: 0 6px; background: #6c6c6c; border: 1px solid #333; }
.info input::placeholder { color: #c4c4c4; font-style: italic; opacity: 1; }
.info button { width: 28px; }
.info .w36 { width: 36px; }
.info .w44 { width: 44px; }
.info .sep { border-left: 1px solid #777; width: 42px; margin-left: 12px; }
.login { display: flex; align-items: center; gap: 8px; width: 152px; padding-left: 3px; }
.winbtns { display: flex; margin-left: 37px; height: 24px; }
.winbtns button { width: 30px; }
.winbtns .close { width: 49px; background: #c0c0c0; }

/* menu bar */
.menubar { display: flex; align-items: center; gap: 36px; height: 32px; padding: 2px 0 0 74px; background: linear-gradient(#9c9c9c, #575757); border-bottom: 2px solid #3a3a3a; }
.docbtns { display: flex; margin-left: auto; padding-right: 2px; }
.docbtns button { width: 24px; }

/* ribbon tabs */
.tabs { display: flex; align-items: center; gap: 28px; height: 32px; padding: 3px 0 0 5px; background: #535353; border-bottom: 2px solid #3c3c3c; color: #dadada; }
.tabs .on { align-self: stretch; margin-right: 271px; padding: 2px 0 0 14px; background: #5c5c5c; border-left: 1px solid #3f3f3f; border-top: 1px solid #777; color: #f0f0f0; }
.collapse { gap: 6px; margin-left: 14px; }

/* ribbon */
.ribbon { display: flex; height: 147px; background: linear-gradient(#4e4e4e, #3b3b3b); border-bottom: 2px solid #777; overflow: hidden; }
.panel { flex: none; display: flex; flex-direction: column; border-right: 2px solid #474747; background: #5e5e5e; }
.panel .body { flex: 1; display: flex; align-items: flex-start; padding-top: 5px; }
.panel h2 { display: flex; align-items: center; height: 28px; background: linear-gradient(#4e4e4e, #565656); }
.panel h2 span { flex: 1; display: flex; align-items: center; justify-content: center; gap: 8px; white-space: nowrap; }
.launch { width: 18px; }
.grid { display: grid; grid-auto-rows: 36px; place-items: center; }
.bigb { flex-direction: column; justify-content: flex-start; padding-top: 2px; line-height: 26px; }
.bigb span { margin-top: 7px; text-align: center; }
.bigb .tri { margin-top: 3px; }
.p-model { width: 192px; }
.p-model .body { padding-left: 11px; }
.p-model h2 { padding-right: 8px; }
.p-model .bigb { width: 72px; }
.p-model .grid { grid-template-columns: 30px; }
.p-mesh { width: 96px; }
.p-mesh .bigb { width: 58px; }
.p-mesh .grid { grid-template-columns: 32px; }
.p-solid { width: 133px; }
.p-solid .grid { padding-left: 3px; grid-template-columns: 36px 42px 28px 22px; }
.p-draw { width: 133px; }
.p-draw .grid { padding-left: 5px; grid-template-columns: 34px 32px 44px 12px; }
.p-edit { width: 204px; }
.p-edit .grid { padding-left: 3px; grid-template-columns: 36px 40px 30px 48px 22px 24px; }
.p-sect { width: 87px; }
.p-sect .bigb { width: 85px; }
.p-ucs { width: 204px; }
.p-ucs .grid { padding-left: 7px; grid-template-columns: 28px 16px 52px 26px 42px 30px; }
.world { grid-column: 3 / 7; justify-self: end; width: 141px; }
.p-view { width: 150px; }
.p-view .body { flex-direction: column; padding: 5px 4px 0 3px; gap: 3px; }
.p-view .combo { width: 100%; }
.vc { height: 34px; gap: 9px; padding-left: 5px; }
.p-sel { width: 241px; }
.p-sel .bigb { width: 100px; }
.p-sel .pressed { width: 54px; height: 107px; margin-left: 2px; background: linear-gradient(#6f93c8, #4d6a9c); border: 1px solid #3a4c70; }
.p-sel .giz { width: 78px; position: relative; }
.giz .tri { position: absolute; right: 0; top: 78px; }
.p-base { width: 87px; }
.p-base .bigb { width: 85px; }
.fold { flex: none; width: 85px; margin-right: 1px; flex-direction: column; justify-content: flex-start; gap: 4px; padding: 6px 0 7px; border: 2px solid #303030; background: linear-gradient(#686868, #4c4c4c); }
.fold .tri { margin-top: auto; }

/* drawing tabs */
.filetabs { display: flex; height: 44px; padding: 5px 0 0 22px; background: #393939; border-bottom: 6px solid #585858; }
.ft { display: flex; align-items: center; width: 182px; padding-left: 23px; height: 33px; background: linear-gradient(#5a5a5a, #4a4a4a); clip-path: polygon(0 100%, 5px 88%, 12px 12%, 20px 0, calc(100% - 20px) 0, calc(100% - 12px) 12%, calc(100% - 5px) 88%, 100% 100%); color: #dcdcdc; }
.ft.on { width: 190px; margin-left: -6px; padding: 0 26px 0 21px; justify-content: space-between; background: linear-gradient(#777, #585858); color: #f4f4f4; }
.plus { width: 30px; height: 23px; margin: 7px 0 0 1px; background: #555; border-radius: 0 12px 0 12px; }

/* work area */
.work { flex: 1; display: flex; background: #5c5c5c; }
.tools { width: 34px; flex: none; align-self: flex-start; display: flex; flex-direction: column; align-items: center; margin: 1px 7px 0 0; border: 1px solid #333; background: #606060; }
.tools.right { margin: 1px 5px 0 7px; }
.tools button { width: 32px; height: 33px; }
.tools .txt { font-size: 27px; font-weight: 700; color: #fff; }
.grip { width: 20px; height: 5px; margin: 3px 0 2px; border-style: solid; border-width: 1px 0; border-color: #333; }
.canvas { position: relative; flex: 1; overflow: hidden; background: #212a33; }
.drawing { position: absolute; inset: 0; }
.vplabel { position: absolute; left: 5px; top: 8px; color: #e4e6ea; }
.viewcube { position: absolute; right: 16px; top: 16px; display: flex; flex-direction: column; align-items: center; width: 124px; }
.wcs { width: 68px; height: 25px; margin-top: 16px; gap: 8px; border-radius: 5px; border: 1px solid #8b909c; background: #969ba8; color: #3f4552; font-size: 16px; }
.navbar { position: absolute; right: 4px; top: 232px; height: 340px; border-radius: 6px; background: #5f666e; }
.cmd { position: absolute; left: 363px; right: 368px; bottom: 1px; }
.hist { padding-left: 85px; font: 18px/22px "Liberation Mono", "Noto Sans CJK SC", monospace; }
.hist .lat { font-size: 17px; }
.hist p { width: fit-content; height: 22px; margin-bottom: 8px; padding: 0 2px; overflow: hidden; border-radius: 2px; background: #555a5c; color: #cfd2d2; white-space: nowrap; }
.hist p:last-child { margin-bottom: 5px; }
.hist .cur { color: #f4f4f4; }
.cmdbar { display: flex; height: 39px; background: #bbbdbc; border-radius: 5px; overflow: hidden; }
.cmdl { display: flex; width: 76px; background: linear-gradient(#6a6a6a, #3c3c3c); }
.cmdl button { width: 32px; }
.dots { width: 8px; margin: 6px 0 6px 4px; background: radial-gradient(#bbb 1px, transparent 1px) 0 0 / 4px 4px; }
.prompt { gap: 4px; padding: 0 0 2px 7px; }
.cmdbar input { flex: 1; padding: 0 0 4px 13px; color: #333; font-size: 18px; }
.cmdbar input::placeholder { color: #666; opacity: 1; }

/* layout tabs */
.layouts { display: flex; align-items: flex-start; height: 31px; padding-left: 11px; background: #393939; font-size: 16px; }
.lt { height: 27px; width: 74px; line-height: 28px; text-align: center; color: #d0d0d0; background: linear-gradient(#4c4c4c, #5e5e5e); clip-path: polygon(0 0, 100% 0, calc(100% - 6px) 70%, calc(100% - 16px) 100%, 16px 100%, 6px 70%); }
.lt.on { background: linear-gradient(#666, #888); color: #fff; font-weight: 700; }
.lt.add { width: 46px; font-weight: 700; }

/* status bar */
.status { display: flex; gap: 3px; height: 38px; padding-left: 155px; background: #393939; }
.sg { flex: none; display: flex; align-items: center; border: 2px solid #6c6c6c; background: #4d4d4d; }
.sg button { height: 34px; }
.coords { width: 256px; padding-left: 12px; justify-content: center; font-size: 16px; white-space: nowrap; }
.model { width: 40px; font-weight: 700; }
.modes { margin-left: 3px; }
.w20 { width: 20px; }
.w32 { width: 32px; }
.w34 { width: 34px; }
.w36 { width: 36px; }
.d { border-left: 2px solid #6c6c6c; }
.scaleb { width: 88px; font-size: 16px; }
.rest { flex: 1; justify-content: flex-end; padding-right: 5px; }

/* overlays */
.videomark { position: absolute; left: 70px; top: 70px; z-index: 5; }
.mark { fill: #fff; stroke: #262626; stroke-width: 7px; paint-order: stroke; stroke-linejoin: round; }
.sitelogo { position: absolute; right: 35px; bottom: 5px; z-index: 6; display: flex; align-items: center; width: 485px; height: 242px; padding-left: 43px; background: #fefefe; color: #080808; }
.sitename { display: flex; flex-direction: column; white-space: nowrap; }
.sitename strong { font: italic 900 53px/54px "Noto Sans CJK SC", sans-serif; padding-top: 3px; }
.sitename em { font: italic 500 35px/32px "Noto Sans", sans-serif; }
```
